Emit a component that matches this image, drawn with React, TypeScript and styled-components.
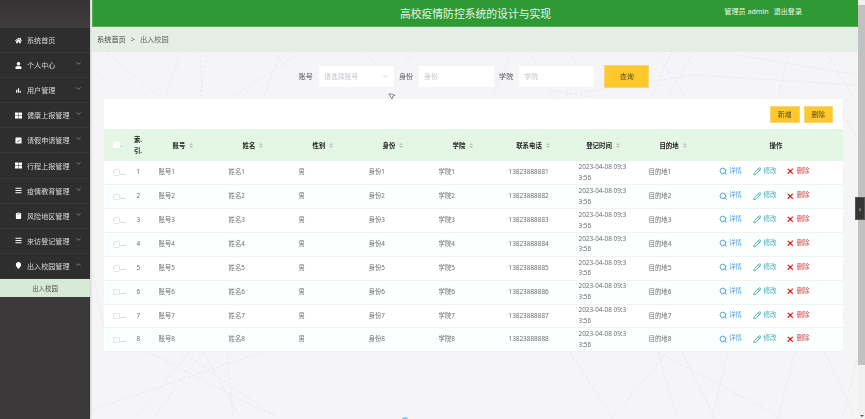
import React from "react";
import styled, { createGlobalStyle } from "styled-components";
import { FaHome, FaUser, FaThLarge, FaBars, FaClipboard, FaMapMarker } from "react-icons/fa";
import { MdBarChart } from "react-icons/md";
import { ChevronDown, ChevronUp, Search, Pencil, X, MousePointer2 } from "lucide-react";

const FONT = `"Noto Sans", "Noto Sans CJK SC", sans-serif`;

const Global = createGlobalStyle`
  html, body { margin: 0; padding: 0; height: 100%; overflow: hidden; background: #f5f5f8; }
  #root { height: 100%; }
  * { box-sizing: border-box; }
  body { font-family: ${FONT}; }
`;

const Shell = styled.div`
  display: flex;
  height: 419px;
  width: 865px;
  overflow: hidden;
  position: relative;
  filter: blur(0.3px);
`;

const Sidebar = styled.aside`
  width: 90px;
  flex: none;
  background: #3a3839;
  box-shadow: 1px 0 2px rgba(0, 0, 0, 0.18);
  display: flex;
  flex-direction: column;
`;

const Brand = styled.div`
  height: 28px;
  background: linear-gradient(#353334, #403d3f);
`;

const Item = styled.div`
  height: 25.1px;
  display: flex;
  align-items: center;
  color: #d8d8d8;
  background: #2f2e2e;
  border-bottom: 1px solid #3a3939;
  font-size: 7.1px;
  padding-left: 15px;
  position: relative;
  svg.lead { width: 7px; height: 7px; color: #fff; flex: none; }
`;

const ItemLabel = styled.span`
  margin-left: 5px;
  white-space: nowrap;
`;

const Chevron = styled.span`
  position: absolute;
  left: 75px;
  top: 7px;
  color: #b4b4b4;
  display: flex;
  svg { width: 7px; height: 7px; }
`;

const SubItem = styled.div`
  height: 18.5px;
  background: #d6e9d5;
  color: #555;
  font-size: 6.4px;
  display: flex;
  align-items: center;
  justify-content: center;
`;

const Main = styled.main`
  flex: 1;
  margin-left: 2px;
  display: flex;
  flex-direction: column;
  position: relative;
  min-width: 0;
`;

const Dashes = styled.svg`
  position: absolute;
  left: 0;
  top: 0;
  width: 766px;
  height: 419px;
  pointer-events: none;
`;

const Header = styled.header`
  height: 26.5px;
  background: #2f9a33;
  border-bottom: 1px solid #55ad57;
  border-left: 1px solid #55ad57;
  display: grid;
  grid-template-columns: 1fr auto 1fr;
  align-items: center;
  color: #eef6ee;
  position: relative;
`;

const Title = styled.h1`
  margin: 0;
  font-size: 10.8px;
  font-weight: 400;
  color: #e8f4e8;
  grid-column: 2;
`;

const UserInfo = styled.div`
  grid-column: 3;
  justify-self: end;
  margin-right: 56px;
  margin-top: -3px;
  font-size: 7.1px;
  display: flex;
  gap: 5px;
  white-space: nowrap;
`;

const Crumbs = styled.nav`
  height: 25.5px;
  background: #e4eee4;
  display: flex;
  align-items: center;
  padding-left: 5px;
  gap: 5px;
  font-size: 7.2px;
  color: #666;
  position: relative;
`;

const CrumbRoot = styled.span`
  color: #444;
`;

const SearchBar = styled.form`
  height: 47px;
  display: flex;
  align-items: center;
  justify-content: center;
  position: relative;
  padding-right: 7px;
  padding-top: 1px;
`;

const FieldLabel = styled.label`
  font-size: 7.1px;
  color: #555;
  margin: 0 6px 0 5px;
  white-space: nowrap;
`;

const Field = styled.div`
  width: 75px;
  height: 21px;
  background: #fff;
  display: flex;
  align-items: center;
  justify-content: space-between;
  padding: 0 5px;
  font-size: 6.9px;
  color: #c4c6cc;
  svg { width: 7px; height: 7px; color: #bbb; }
`;

const QueryButton = styled.button`
  width: 45px;
  height: 23px;
  margin-left: 10px;
  background: #ffc92d;
  border: 1px solid #f6d776;
  font: inherit;
  font-size: 7.1px;
  color: #5a4c18;
  padding: 0;
`;

const Card = styled.section`
  margin: 0 15px 0 12px;
  background: #fff;
  position: relative;
`;

const Toolbar = styled.div`
  height: 30px;
  display: flex;
  justify-content: flex-end;
  align-items: center;
  gap: 4px;
  padding-right: 10px;
`;

const SmallButton = styled.button`
  width: 29.5px;
  height: 17px;
  background: #ffc92d;
  border: 1px solid #f6d776;
  font: inherit;
  font-size: 6.9px;
  color: #5a4c18;
  padding: 0;
`;

const Table = styled.table`
  width: 739px;
  border-collapse: collapse;
  table-layout: fixed;
  font-size: 6.4px;
  color: #6e6e6e;
`;

const HeadCell = styled.th<{ $pr?: number }>`
  height: 32px;
  background: #e4f6e4;
  color: #222;
  font-weight: 700;
  font-size: 6.4px;
  text-align: center;
  padding: 0 ${(p) => p.$pr ?? 10}px 0 0;
  line-height: 11px;
  white-space: nowrap;
`;

const Row = styled.tr<{ $alt?: boolean }>`
  background: ${(p) => (p.$alt ? "#fbfffd" : "#fff")};
  border-bottom: 1px solid #eff3f1;
`;

const Cell = styled.td`
  height: 23.85px;
  padding: 0 5.5px;
  line-height: 10.8px;
  overflow: hidden;
  white-space: nowrap;
`;

const TimeCell = styled(Cell)`
  white-space: normal;
  word-break: break-all;
  padding-right: 14px;
`;

const CheckBoxCell = styled(Cell)`
  padding: 0;
`;

const CheckCell = styled.div`
  display: flex;
  align-items: center;
  padding-left: 9px;
  gap: 1px;
  color: #aaa;
  line-height: 8px;
`;

const CheckBox = styled.span<{ $head?: boolean }>`
  width: 6.5px;
  height: 6.5px;
  background: #fff;
  border: 1px solid ${(p) => (p.$head ? "#fff" : "#e6e6e6")};
  border-radius: 1px;
  flex: none;
`;

const Sort = styled.span`
  display: inline-flex;
  flex-direction: column;
  gap: 1px;
  margin-left: 4px;
  vertical-align: middle;
  &::before, &::after {
    content: "";
    width: 0;
    height: 0;
    border-left: 2px solid transparent;
    border-right: 2px solid transparent;
  }
  &::before { border-bottom: 2px solid #bcc0c8; }
  &::after { border-top: 2px solid #bcc0c8; }
`;

const Actions = styled.div`
  display: flex;
  align-items: center;
  margin-top: -2px;
`;

const Action = styled.span<{ $color: string; $w: number }>`
  display: inline-flex;
  align-items: center;
  width: ${(p) => p.$w}px;
  gap: 2px;
  color: ${(p) => p.$color};
  font-size: 6.5px;
  svg { width: 8.5px; height: 8.5px; flex: none; }
`;

const ScrollTrack = styled.div`
  width: 7px;
  flex: none;
  background: #f1f1f1;
  display: flex;
  flex-direction: column;
  align-items: center;
  padding-top: 5px;
`;

const ScrollThumb = styled.div`
  width: 7px;
  height: 360px;
  background: #c1c1c1;
`;

const ScrollArrow = styled.div`
  margin-top: auto;
  margin-bottom: 2px;
  width: 0;
  height: 0;
  border-left: 2px solid transparent;
  border-right: 2px solid transparent;
  border-top: 2px solid #505050;
`;

const Handle = styled.div`
  position: absolute;
  left: 855px;
  top: 197px;
  width: 10px;
  height: 23px;
  background: #353535;
  border: 1px solid #555;
  color: #bbb;
  font-size: 8px;
  display: flex;
  align-items: center;
  justify-content: center;
`;

const Pointer = styled.span`
  position: absolute;
  left: 296px;
  top: 91px;
  display: flex;
  color: #555;
  svg { width: 8px; height: 10px; fill: #fff; transform: rotate(-8deg); }
`;

const Dot = styled.span`
  position: absolute;
  left: 310px;
  top: 417px;
  width: 6px;
  height: 4px;
  border-radius: 50%;
  background: #8ec9f0;
`;

const LineIcon = () => (
  <svg className="lead" viewBox="0 0 16 16">
    <rect x="1" y="1" width="14" height="14" rx="1.5" fill="#fff" />
    <path d="M4 11l3-2 2 1 3-4" stroke="#2f2e2e" strokeWidth="1.6" fill="none" />
  </svg>
);

type Menu = { label: string; icon: React.ReactNode; chevron?: "down" | "up" };
const lead = { className: "lead" };
const menus: Menu[] = [
  { label: "系统首页", icon: <FaHome {...lead} /> },
  { label: "个人中心", icon: <FaUser {...lead} />, chevron: "down" },
  { label: "用户管理", icon: <MdBarChart {...lead} />, chevron: "down" },
  { label: "健康上报管理", icon: <FaThLarge {...lead} />, chevron: "down" },
  { label: "请假申请管理", icon: <LineIcon />, chevron: "down" },
  { label: "行程上报管理", icon: <FaThLarge {...lead} />, chevron: "down" },
  { label: "疫情教育管理", icon: <FaBars {...lead} />, chevron: "down" },
  { label: "风险地区管理", icon: <FaClipboard {...lead} />, chevron: "down" },
  { label: "来访登记管理", icon: <FaBars {...lead} />, chevron: "down" },
  { label: "出入校园管理", icon: <FaMapMarker {...lead} />, chevron: "up" },
];

const columns = ["账号", "姓名", "性别", "身份", "学院", "联系电话", "登记时间", "目的地"];
const rows = [1, 2, 3, 4, 5, 6, 7, 8];

const lines = [
  [15, 53, 68, 97], [88, 55, 73, 98], [108, 55, 110, 97], [115, 55, 108, 97], [208, 53, 140, 97],
  [183, 55, 195, 67], [188, 55, 171, 98], [273, 52, 286, 67], [323, 52, 311, 67], [438, 52, 461, 99],
  [478, 52, 485, 66], [418, 55, 401, 97], [458, 90, 498, 97], [566, 55, 593, 97], [600, 55, 576, 97],
  [580, 52, 560, 95], [696, 55, 686, 97], [646, 55, 766, 75], [473, 95, 600, 75], [600, 75, 766, 85],
  [736, 55, 763, 100], [0, 70, 12, 80], [0, 270, 12, 330], [755, 120, 766, 140],
  [56, 352, 183, 417], [98, 352, 43, 418], [111, 352, 61, 418], [111, 352, 148, 417], [135, 352, 141, 418],
  [170, 352, 0, 410], [90, 352, 185, 418], [478, 352, 520, 418], [566, 352, 585, 418], [590, 352, 623, 418],
  [636, 352, 620, 418], [576, 352, 520, 418], [566, 352, 690, 418], [703, 352, 686, 418], [733, 352, 763, 418],
  [766, 355, 750, 418],
];

export default function App() {
  return (
    <Shell>
      <Global />
      <Sidebar>
        <Brand />
        {menus.map((m) => (
          <Item key={m.label}>
            {m.icon}
            <ItemLabel>{m.label}</ItemLabel>
            {m.chevron && <Chevron>{m.chevron === "up" ? <ChevronUp /> : <ChevronDown />}</Chevron>}
          </Item>
        ))}
        <SubItem>出入校园</SubItem>
      </Sidebar>
      <Main>
        <Dashes viewBox="0 0 766 419">
          {lines.map(([x1, y1, x2, y2], i) => (
            <line key={i} x1={x1} y1={y1} x2={x2} y2={y2} stroke="#e6e6ea" strokeWidth="0.8" strokeDasharray="3 2" />
          ))}
        </Dashes>
        <Header>
          <Title>高校疫情防控系统的设计与实现</Title>
          <UserInfo>
            <span>管理员 admin</span>
            <span>退出登录</span>
          </UserInfo>
        </Header>
        <Crumbs>
          <CrumbRoot>系统首页</CrumbRoot>
          <span>&gt;</span>
          <span>出入校园</span>
        </Crumbs>
        <SearchBar>
          <FieldLabel>账号</FieldLabel>
          <Field>
            请选择账号
            <ChevronDown />
          </Field>
          <FieldLabel>身份</FieldLabel>
          <Field>身份</Field>
          <FieldLabel>学院</FieldLabel>
          <Field>学院</Field>
          <QueryButton type="button">查询</QueryButton>
        </SearchBar>
        <Card>
          <Toolbar>
            <SmallButton type="button">新增</SmallButton>
            <SmallButton type="button">删除</SmallButton>
          </Toolbar>
          <Table>
            <colgroup>
              <col width={27} />
              <col width={22} />
              {columns.map((c) => (
                <col key={c} width={70} />
              ))}
              <col width={130} />
            </colgroup>
            <thead>
              <tr>
                <HeadCell $pr={0}>
                  <CheckCell>
                    <CheckBox $head />.
                  </CheckCell>
                </HeadCell>
                <HeadCell $pr={8}>
                  索.
                  <br />
                  引.
                </HeadCell>
                {columns.map((c) => (
                  <HeadCell key={c}>
                    {c}
                    <Sort />
                  </HeadCell>
                ))}
                <HeadCell $pr={4}>操作</HeadCell>
              </tr>
            </thead>
            <tbody>
              {rows.map((n) => (
                <Row key={n} $alt={n % 2 === 0}>
                  <CheckBoxCell>
                    <CheckCell>
                      <CheckBox />…
                    </CheckCell>
                  </CheckBoxCell>
                  <Cell>{n}</Cell>
                  <Cell>账号{n}</Cell>
                  <Cell>姓名{n}</Cell>
                  <Cell>男</Cell>
                  <Cell>身份{n}</Cell>
                  <Cell>学院{n}</Cell>
                  <Cell>1382388888{n}</Cell>
                  <TimeCell>2023-04-08 09:33:56</TimeCell>
                  <Cell>目的地{n}</Cell>
                  <Cell>
                    <Actions>
                      <Action $color="#4d9fdb" $w={34.5}>
                        <Search strokeWidth={2.6} />
                        详情
                      </Action>
                      <Action $color="#45adb0" $w={33}>
                        <Pencil strokeWidth={2.6} />
                        修改
                      </Action>
                      <Action $color="#d04a4a" $w={30}>
                        <X color="#d9141e" strokeWidth={3.6} />
                        删除
                      </Action>
                    </Actions>
                  </Cell>
                </Row>
              ))}
            </tbody>
          </Table>
        </Card>
        <Pointer>
          <MousePointer2 />
        </Pointer>
        <Dot />
      </Main>
      <ScrollTrack>
        <ScrollThumb />
        <ScrollArrow />
      </ScrollTrack>
      <Handle>‹</Handle>
    </Shell>
  );
}
